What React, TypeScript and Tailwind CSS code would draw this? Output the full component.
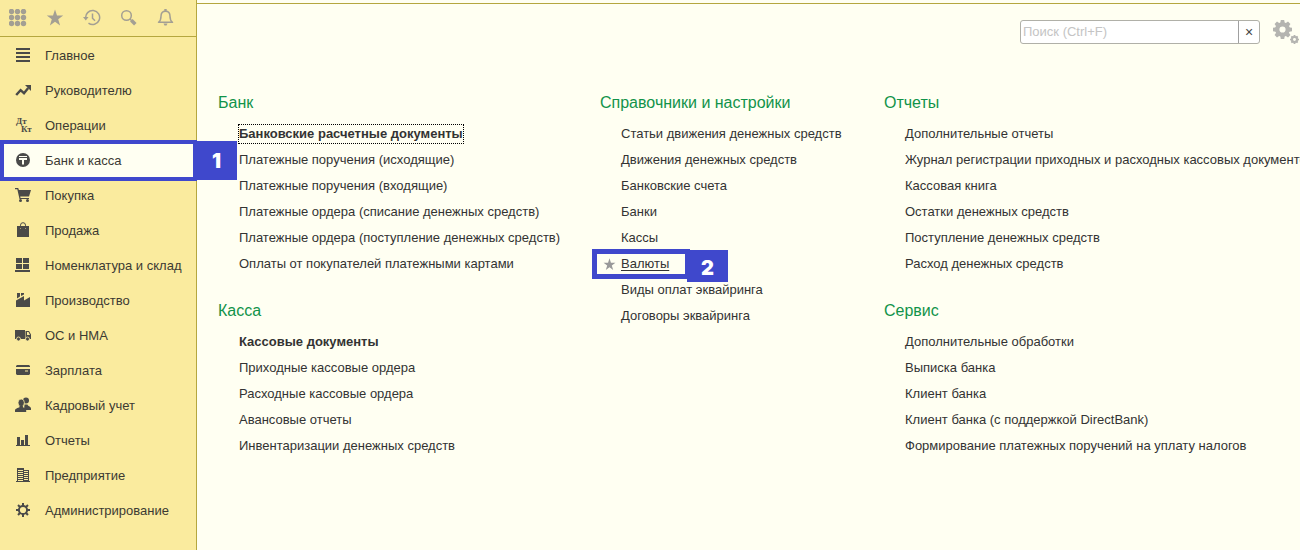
import type { ReactNode } from "react";
import clsx from "clsx";

type IconProps = { children: ReactNode };

// Section icons are drawn on a 17px grid
const Glyph = ({ children }: IconProps) => (
  <svg width="17" height="17" viewBox="0 0 17 17" fill="currentColor" className="shrink-0" aria-hidden="true">
    {children}
  </svg>
);

const gearTeeth = [0, 45, 90, 135, 180, 225, 270, 315];

const sections: { label: string; icon: ReactNode; active?: boolean }[] = [
  {
    label: "Главное",
    icon: (
      <Glyph>
        <path d="M1 1h14v2H1zM1 5h14v2H1zM1 9h14v2H1zM1 13h14v2H1z" />
      </Glyph>
    ),
  },
  {
    label: "Руководителю",
    icon: (
      <Glyph>
        <path d="M1.2 13 5.6 8.2l3.4 3L13.2 6" fill="none" stroke="currentColor" strokeWidth="2.4" />
        <path d="M10 3h6v6z" />
      </Glyph>
    ),
  },
  {
    label: "Операции",
    icon: (
      <Glyph>
        <text x="1" y="7" fontSize="9" fontWeight="700" fontFamily="Liberation Serif, serif">Дт</text>
        <text x="6" y="15" fontSize="9" fontWeight="700" fontFamily="Liberation Serif, serif">Кт</text>
      </Glyph>
    ),
  },
  {
    label: "Банк и касса",
    active: true,
    icon: (
      <Glyph>
        <circle cx="8" cy="8" r="7" />
        <path d="M4 4h8v1H4zM4 6h8v2H9v4.500H7V8H4z" fill="#fffff2" />
      </Glyph>
    ),
  },
  {
    label: "Покупка",
    icon: (
      <Glyph>
        <path d="M0 1h3.200l.7 2H16l-2 6.500H5.200l.4 1.500H14v1H4.500L2.300 2.200H0z" />
        <circle cx="5.500" cy="13.500" r="1.500" />
        <circle cx="12.500" cy="13.500" r="1.500" />
      </Glyph>
    ),
  },
  {
    label: "Продажа",
    icon: (
      <Glyph>
        <path d="M2 4h3v2.500h1V4h4v2.500h1V4h3v11H2z" />
        <path d="M5.500 6V3.200a2.500 2.500 0 0 1 5 0V6" fill="none" stroke="currentColor" />
      </Glyph>
    ),
  },
  {
    label: "Номенклатура и склад",
    icon: (
      <Glyph>
        <path d="M1 1h6v5H1zM8 1h6v5H8zM1 7h6v5H1zM8 7h6v5H8zM0 13h15v2H0z" />
      </Glyph>
    ),
  },
  {
    label: "Производство",
    icon: (
      <Glyph>
        <path d="M2 1h3v3.500L2 6.500zM6 1h3v1.500L6 4zM1 8.500 9 4v4.500L15 5v10H1z" />
      </Glyph>
    ),
  },
  {
    label: "ОС и НМА",
    icon: (
      <Glyph>
        <path d="M0 3h10v9H0z" />
        <path fillRule="evenodd" d="M10.500 4H14l2 3.500V12h-5.500zM12 5v3h3l-1.500-3z" />
        <circle cx="3.500" cy="12" r="2" stroke="#faeb9e" strokeWidth="0.800" />
        <circle cx="12.500" cy="12" r="2" stroke="#faeb9e" strokeWidth="0.800" />
      </Glyph>
    ),
  },
  {
    label: "Зарплата",
    icon: (
      <Glyph>
        <path fillRule="evenodd" d="M2 3h12l1 1v1H1V4zM1 7h14v5l-1 1H2l-1-1zM10 8.500v1h3v-1z" />
      </Glyph>
    ),
  },
  {
    label: "Кадровый учет",
    icon: (
      <Glyph>
        <circle cx="11" cy="3.500" r="3" />
        <path d="M9.500 7.500h3c0 1.500 3.500 2 3.500 4V13H9z" />
        <ellipse cx="6.200" cy="5.800" rx="3.200" ry="3.800" stroke="#faeb9e" strokeWidth="0.800" />
        <path d="M4.500 8.500h3.400v1.700c1.500.8 3.300 1.300 3.300 3.300V15H0v-1.500c0-2 3-2.500 4.500-3.300z" />
      </Glyph>
    ),
  },
  {
    label: "Отчеты",
    icon: (
      <Glyph>
        <path d="M2 5h3v8H2zM6 8h3v5H6zM10 3h3v10h-3zM1 13h14v1H1z" />
      </Glyph>
    ),
  },
  {
    label: "Предприятие",
    icon: (
      <Glyph>
        <path
          fillRule="evenodd"
          d="M2 1h7v2h5v11h1v1H1v-1h1zM3 3v1h5V3zM3 5v1h5V5zM3 7v1h5V7zM3 9v1h5V9zM3 11v1h5v-1zM3 13v1h5v-1zM9 4v1h4V4zM9 6v1h4V6zM9 8v1h4V8zM9 10v1h4v-1zM9 12v1h4v-1z"
        />
      </Glyph>
    ),
  },
  {
    label: "Администрирование",
    icon: (
      <Glyph>
        <circle cx="8" cy="8" r="4.100" fill="none" stroke="currentColor" strokeWidth="2" />
        {gearTeeth.map((angle) => (
          <path key={angle} d="M7 1h2v3H7z" transform={`rotate(${angle} 8 8)`} />
        ))}
      </Glyph>
    ),
  },
];

const ToolIcon = ({ children }: IconProps) => (
  <svg width="18" height="18" viewBox="0 0 18 18" fill="currentColor" aria-hidden="true">
    {children}
  </svg>
);

const STAR = "M9 .5l2 6h6.200l-5 3.800 1.900 6.200L9 12.700l-5.100 3.800 1.900-6.200-5-3.800H7z";

const tools = [
  {
    label: "Меню функций",
    icon: (
      <ToolIcon>
        {[3, 9, 15].map((y) => [3, 9, 15].map((x) => <circle key={`${x}-${y}`} cx={x - 0.5} cy={y - 0.5} r="2.700" />))}
      </ToolIcon>
    ),
  },
  { label: "Избранное", icon: <ToolIcon><path d={STAR} /></ToolIcon> },
  {
    label: "История",
    icon: (
      <ToolIcon>
        <path d="M2.700 9.500A7 7 0 1 1 5.500 14.200M9.500 4.500v4.700l2.500 2.500" fill="none" stroke="currentColor" strokeWidth="1.500" />
        <path d="M0 8h5.500l-2.700 3.500z" />
      </ToolIcon>
    ),
  },
  {
    label: "Поиск",
    icon: (
      <ToolIcon>
        <circle cx="6.500" cy="6.500" r="4.800" fill="none" stroke="currentColor" strokeWidth="1.500" />
        <path d="m10 10 1.700 1.700" stroke="currentColor" strokeWidth="1.500" />
        <path d="m11.300 11.300 4 4" stroke="currentColor" strokeWidth="3.500" />
      </ToolIcon>
    ),
  },
  {
    label: "Оповещения",
    icon: (
      <ToolIcon>
        <path
          d="M1.500 13.300c2-1.300 2.500-2.500 2.500-6 0-3 1.700-5 4.500-5s4.500 2 4.500 5c0 3.500.5 4.700 2.500 6z"
          fill="none"
          stroke="currentColor"
          strokeWidth="1.500"
          strokeLinejoin="round"
        />
        <path d="M7.300 0h2.400v2H7.300zM6.500 14.500h4l-1 2h-2z" />
      </ToolIcon>
    ),
  },
];

type Item = { text: string; bold?: boolean; focused?: boolean; marked?: boolean };
type Group = { title: string; items: Item[] };

const columns: Group[][] = [
  [
    {
      title: "Банк",
      items: [
        { text: "Банковские расчетные документы", bold: true, focused: true },
        { text: "Платежные поручения (исходящие)" },
        { text: "Платежные поручения (входящие)" },
        { text: "Платежные ордера (списание денежных средств)" },
        { text: "Платежные ордера (поступление денежных средств)" },
        { text: "Оплаты от покупателей платежными картами" },
      ],
    },
    {
      title: "Касса",
      items: [
        { text: "Кассовые документы", bold: true },
        { text: "Приходные кассовые ордера" },
        { text: "Расходные кассовые ордера" },
        { text: "Авансовые отчеты" },
        { text: "Инвентаризации денежных средств" },
      ],
    },
  ],
  [
    {
      title: "Справочники и настройки",
      items: [
        { text: "Статьи движения денежных средств" },
        { text: "Движения денежных средств" },
        { text: "Банковские счета" },
        { text: "Банки" },
        { text: "Кассы" },
        { text: "Валюты", marked: true },
        { text: "Виды оплат эквайринга" },
        { text: "Договоры эквайринга" },
      ],
    },
  ],
  [
    {
      title: "Отчеты",
      items: [
        { text: "Дополнительные отчеты" },
        { text: "Журнал регистрации приходных и расходных кассовых документов" },
        { text: "Кассовая книга" },
        { text: "Остатки денежных средств" },
        { text: "Поступление денежных средств" },
        { text: "Расход денежных средств" },
      ],
    },
    {
      title: "Сервис",
      items: [
        { text: "Дополнительные обработки" },
        { text: "Выписка банка" },
        { text: "Клиент банка" },
        { text: "Клиент банка (с поддержкой DirectBank)" },
        { text: "Формирование платежных поручений на уплату налогов" },
      ],
    },
  ],
];

function Sidebar() {
  return (
    <aside className="w-[197px] shrink-0 border-r border-[#b5a73f] bg-[#faeb9e]">
      <div className="flex h-[37px] items-center gap-[19px] border-b border-[#b5a73f] pl-[9px] text-[#a39f93]">
        {tools.map((tool) => (
          <button key={tool.label} type="button" aria-label={tool.label}>
            {tool.icon}
          </button>
        ))}
      </div>
      <nav className="pt-px">
        {sections.map((section) => (
          <div key={section.label} className="relative">
            {section.active && (
              <>
                <div className="absolute -inset-y-[3px] left-0 -right-px border-4 border-[#3f48cc] bg-[#fffff2]" />
                <span className="absolute -inset-y-[2px] left-full z-10 flex w-[41px] items-center justify-center bg-[#3f48cc] font-[Inter,sans-serif] text-xl font-black text-white">
                  1
                </span>
              </>
            )}
            <a href="#" className="relative flex h-[35px] items-center gap-[13px] pl-[15px] text-[13px] whitespace-nowrap text-[#3c3a33]">
              <span className="text-[#4a4a48]">{section.icon}</span>
              {section.label}
            </a>
          </div>
        ))}
      </nav>
    </aside>
  );
}

const Gear = ({ size }: { size: number }) => (
  <svg width={size} height={size} viewBox="0 0 20 20" aria-hidden="true">
    <circle cx="10" cy="10" r="5.500" fill="none" stroke="currentColor" strokeWidth="4.500" />
    {gearTeeth.map((angle) => (
      <path key={angle} d="M8.200 0h3.600l.7 4h-5z" fill="currentColor" transform={`rotate(${angle} 10 10)`} />
    ))}
  </svg>
);

function SearchBar() {
  return (
    <div className="flex h-14 items-center justify-end pr-px">
      <div className="flex h-6 w-60 rounded-[3px] border border-[#b0b0a8] bg-white">
        <input
          type="text"
          aria-label="Поиск"
          placeholder="Поиск (Ctrl+F)"
          className="min-w-0 flex-1 bg-transparent px-[2px] text-[13px] outline-none placeholder:text-[#c4c4c4]"
        />
        <button type="button" aria-label="Очистить" className="w-[21px] border-l border-[#a0a0a0] text-sm leading-none text-[#444]">
          ×
        </button>
      </div>
      <button type="button" aria-label="Настройки" className="ml-[13px] flex h-6 items-start text-[#b4b4b0]">
        <Gear size={19} />
        <span className="-ml-[2px] self-end">
          <Gear size={9} />
        </span>
      </button>
    </div>
  );
}

function MenuItem({ item }: { item: Item }) {
  return (
    <li className="relative flex h-[26px] items-center">
      {item.marked && (
        <>
          <div className="absolute -top-[2px] -left-[29px] flex h-[30px] w-[98px] items-center border-[5px] border-[#3f48cc] pl-[6px] text-[#999]">
            <svg width="13" height="13" viewBox="0 0 18 18" fill="currentColor" aria-hidden="true">
              <path d={STAR} />
            </svg>
          </div>
          <span className="absolute -top-px left-[66px] z-10 flex h-8 w-[41px] items-center justify-center bg-[#3f48cc] pt-1 font-[Inter,sans-serif] text-xl font-black text-white">
            2
          </span>
        </>
      )}
      <a
        href="#"
        className={clsx(
          "relative leading-[18px]",
          item.bold && "font-bold",
          item.focused && "outline-1 outline-dotted outline-black",
          item.marked && "underline underline-offset-2"
        )}
      >
        {item.text}
      </a>
    </li>
  );
}

export default function App() {
  return (
    <div className="flex min-h-screen overflow-hidden bg-[#fffff2] font-['Liberation_Sans',Arial,sans-serif]">
      <Sidebar />
      <main className="min-w-0 flex-1 pt-[3px]">
        <div className="border-t border-[#b5a73f]">
          <SearchBar />
          <div className="mt-[29px] grid grid-cols-[382fr_284fr_416fr] pl-[21px]">
            {columns.map((groups) => (
              <div key={groups[0].title} className="flex min-w-0 flex-col gap-5">
                {groups.map((group) => (
                  <section key={group.title}>
                    <h2 className="mb-1 text-base leading-7 text-[#12934a]">{group.title}</h2>
                    <ul className="pl-[21px] text-[13px] whitespace-nowrap text-[#333]">
                      {group.items.map((item) => (
                        <MenuItem key={item.text} item={item} />
                      ))}
                    </ul>
                  </section>
                ))}
              </div>
            ))}
          </div>
        </div>
      </main>
    </div>
  );
}
